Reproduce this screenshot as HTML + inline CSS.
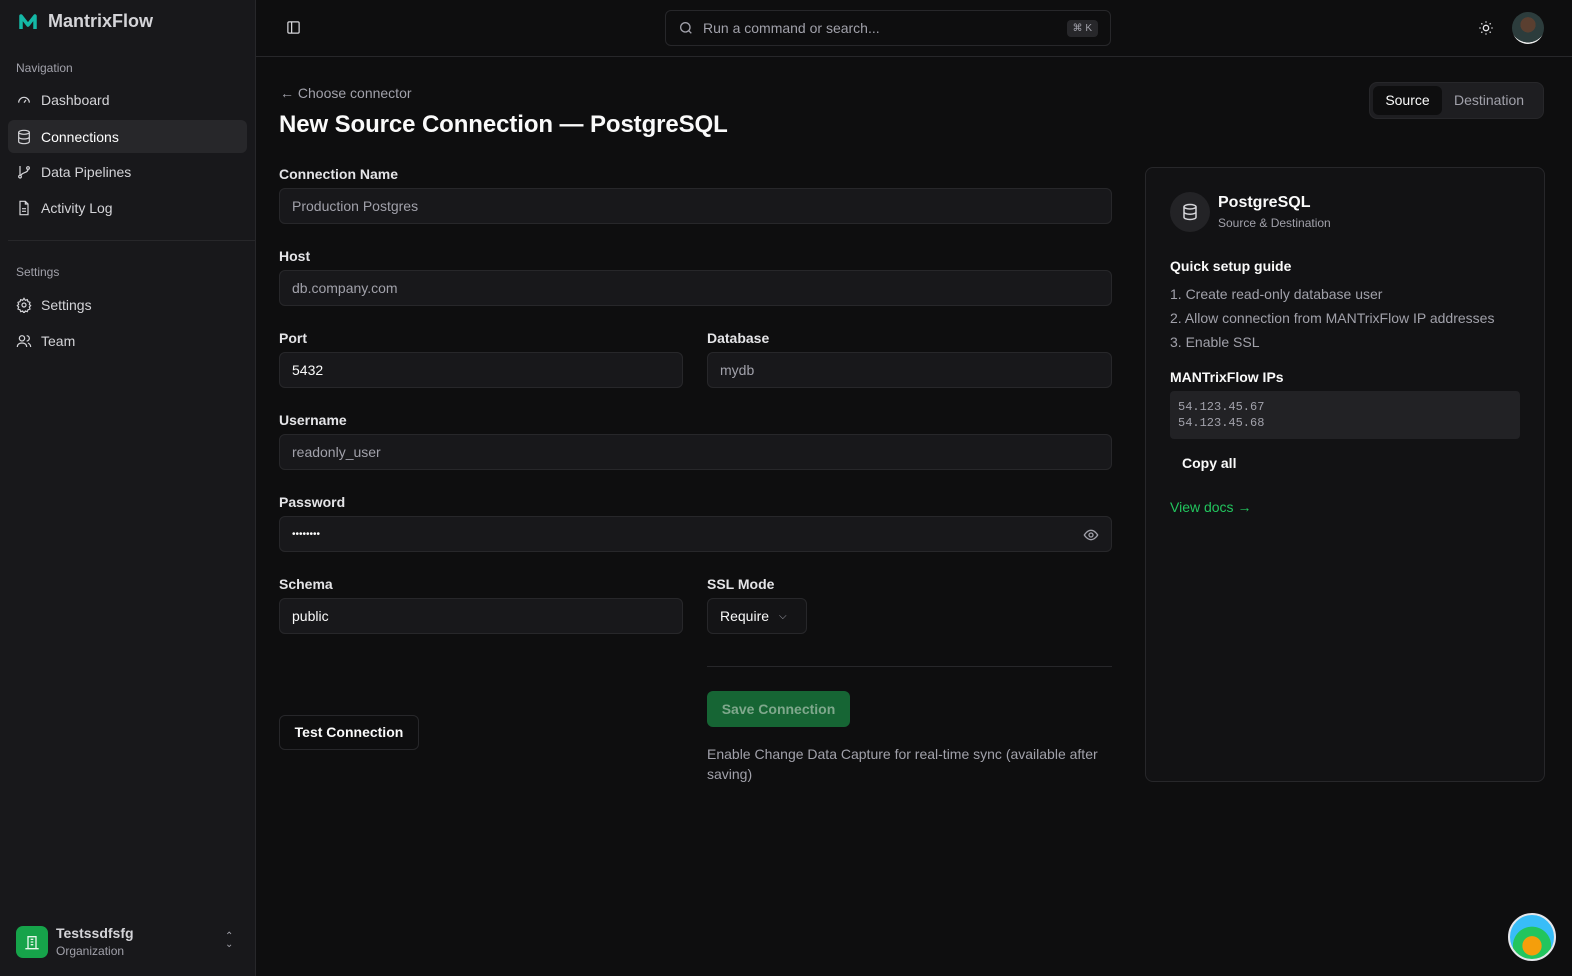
<!DOCTYPE html>
<html><head><meta charset="utf-8"><style>
*{box-sizing:border-box;margin:0;padding:0}
body{width:1572px;height:976px;background:#0e0e0f;font-family:"Liberation Sans",sans-serif;color:#fafafa;position:relative;overflow:hidden;font-size:14px}
.sb{position:absolute;left:0;top:0;width:256px;height:976px;background:#18181b;border-right:1px solid #27272a}
.logo{position:absolute;left:18px;top:11px;font-size:18px;font-weight:bold;color:#d4d4d8;display:flex;align-items:center;gap:10px}
.sec{position:absolute;left:16px;font-size:12px;color:#a1a1aa}
.nav{position:absolute;left:8px;width:239px;height:33px;display:flex;align-items:center;padding-left:8px;gap:9px;color:#d4d4d8;font-size:14px;border-radius:6px}
.nav svg{width:16px;height:16px;stroke:#d4d4d8;fill:none;stroke-width:1.8}
.nav.act{background:#27272a;color:#fff}
.top{position:absolute;left:256px;top:0;right:0;height:57px;border-bottom:1px solid #27272a}
.search{position:absolute;left:665px;top:10px;width:446px;height:36px;border:1px solid #27272a;border-radius:6px;background:#0e0e0f;color:#a1a1aa;font-size:14px;display:flex;align-items:center;padding-left:12px;gap:9px}
.kbd{position:absolute;right:12px;top:9px;background:#27272a;border-radius:4px;font-size:10px;padding:3px 6px;color:#a1a1aa}
.lbl{position:absolute;font-size:14px;font-weight:bold;color:#e4e4e7}
.inp{position:absolute;height:36px;background:#18181b;border:1px solid #27272a;border-radius:6px;padding-left:12px;display:flex;align-items:center;font-size:14px;color:#a1a1aa}
.inp.v{color:#fafafa}
.card{position:absolute;left:1145px;top:167px;width:400px;height:615px;border:1px solid #27272a;border-radius:8px;background:#121214}
.c{position:absolute;left:24px}
</style></head><body>
<div class="sb">
 <div class="logo"><svg width="20" height="20" viewBox="0 0 20 20"><path d="M3 17V4l7 9 7-9v13" stroke="#14b8a6" stroke-width="3.5" fill="none" stroke-linejoin="round"/></svg>MantrixFlow</div>
 <div class="sec" style="top:61px">Navigation</div>
 <div class="nav" style="top:83px"><svg viewBox="0 0 24 24"><path d="M4 16a8 8 0 1 1 16 0"/><path d="M12 16l3-4"/></svg>Dashboard</div>
 <div class="nav act" style="top:120px"><svg viewBox="0 0 24 24"><ellipse cx="12" cy="5" rx="8" ry="3"/><path d="M4 5v14c0 1.7 3.6 3 8 3s8-1.3 8-3V5M4 12c0 1.7 3.6 3 8 3s8-1.3 8-3"/></svg>Connections</div>
 <div class="nav" style="top:155px"><svg viewBox="0 0 24 24"><circle cx="6" cy="19" r="2"/><circle cx="18" cy="6" r="2"/><path d="M6 3v14M18 8c0 6-10 4-11 10"/></svg>Data Pipelines</div>
 <div class="nav" style="top:191px"><svg viewBox="0 0 24 24"><path d="M14 2H6v20h12V6z M14 2v4h4M9 13h6M9 17h6"/></svg>Activity Log</div>
 <div style="position:absolute;left:8px;right:0;top:240px;border-top:1px solid #27272a"></div>
 <div class="sec" style="top:265px">Settings</div>
 <div class="nav" style="top:288px"><svg viewBox="0 0 24 24"><circle cx="12" cy="12" r="3"/><path d="M12 2l2 3 3-1 1 3 3 1-1 3 2 2-2 2 1 3-3 1-1 3-3-1-2 3-2-3-3 1-1-3-3-1 1-3-2-2 2-2-1-3 3-1 1-3 3 1z"/></svg>Settings</div>
 <div class="nav" style="top:324px"><svg viewBox="0 0 24 24"><circle cx="9" cy="8" r="4"/><path d="M2 21c0-4 3-6 7-6s7 2 7 6M16 4a4 4 0 0 1 0 8M22 21c0-3-2-5-4-6"/></svg>Team</div>
 <div style="position:absolute;left:16px;top:926px;width:32px;height:32px;border-radius:7px;background:#16a34a;display:flex;align-items:center;justify-content:center"><svg width="16" height="16" viewBox="0 0 24 24" fill="none" stroke="#e7f7ec" stroke-width="2"><path d="M6 22V4h12v18M2 22h20M10 8h4M10 12h4M10 16h4"/></svg></div>
 <div style="position:absolute;left:56px;top:925px;font-size:14px;color:#d4d4d8;font-weight:bold">Testssdfsfg</div>
 <div style="position:absolute;left:56px;top:944px;font-size:12px;color:#a1a1aa">Organization</div>
 <div style="position:absolute;left:225px;top:933px;color:#a1a1aa;font-size:10px;line-height:8px">⌃<br>⌄</div>
</div>
<div class="top">
 <svg style="position:absolute;left:30px;top:20px" width="15" height="15" viewBox="0 0 24 24" fill="none" stroke="#d4d4d8" stroke-width="2"><rect x="3" y="3" width="18" height="18" rx="2"/><path d="M9 3v18"/></svg>
 <svg style="position:absolute;left:1222px;top:20px" width="16" height="16" viewBox="0 0 24 24" fill="none" stroke="#e4e4e7" stroke-width="2"><circle cx="12" cy="12" r="4"/><path d="M12 2v2M12 20v2M2 12h2M20 12h2M5 5l1.5 1.5M17.5 17.5L19 19M5 19l1.5-1.5M17.5 6.5L19 5"/></svg>
 <div style="position:absolute;left:1256px;top:12px;width:32px;height:32px;border-radius:50%;background:radial-gradient(circle at 50% 40%,#5a3f30 0 30%,#2c3c3c 31% 70%,#eee 71%)"></div>
</div>
<div class="search"><svg width="16" height="16" viewBox="0 0 24 24" fill="none" stroke="#a1a1aa" stroke-width="2"><circle cx="11" cy="11" r="7"/><path d="M20 20l-4-4"/></svg>Run a command or search...<span class="kbd">⌘ K</span></div>

<div style="position:absolute;left:280px;top:85px;font-size:14px;color:#a1a1aa">← Choose connector</div>
<div style="position:absolute;left:279px;top:111px;font-size:24px;font-weight:bold;letter-spacing:-0.1px">New Source Connection — PostgreSQL</div>
<div style="position:absolute;left:1369px;top:82px;width:175px;height:37px;background:#1e1e21;border:1px solid #27272a;border-radius:8px"><div style="position:absolute;left:3px;top:3px;width:69px;height:29px;background:#0e0e0f;border-radius:6px;text-align:center;line-height:29px;font-size:14px">Source</div><div style="position:absolute;left:84px;top:3px;line-height:29px;font-size:14px;color:#a1a1aa">Destination</div></div>

<div class="lbl" style="left:279px;top:166px">Connection Name</div>
<div class="inp" style="left:279px;top:188px;width:833px">Production Postgres</div>
<div class="lbl" style="left:279px;top:248px">Host</div>
<div class="inp" style="left:279px;top:270px;width:833px">db.company.com</div>
<div class="lbl" style="left:279px;top:330px">Port</div>
<div class="inp v" style="left:279px;top:352px;width:404px">5432</div>
<div class="lbl" style="left:707px;top:330px">Database</div>
<div class="inp" style="left:707px;top:352px;width:405px">mydb</div>
<div class="lbl" style="left:279px;top:412px">Username</div>
<div class="inp" style="left:279px;top:434px;width:833px">readonly_user</div>
<div class="lbl" style="left:279px;top:494px">Password</div>
<div class="inp v" style="left:279px;top:516px;width:833px;font-size:10px">••••••••<svg style="position:absolute;right:12px;top:10px" width="16" height="16" viewBox="0 0 24 24" fill="none" stroke="#a1a1aa" stroke-width="2"><path d="M2 12s4-7 10-7 10 7 10 7-4 7-10 7S2 12 2 12z"/><circle cx="12" cy="12" r="3"/></svg></div>
<div class="lbl" style="left:279px;top:576px">Schema</div>
<div class="inp v" style="left:279px;top:598px;width:404px">public</div>
<div class="lbl" style="left:707px;top:576px">SSL Mode</div>
<div class="inp v" style="left:707px;top:598px;width:100px;background:#141416">Require <span style="color:#a1a1aa;margin-left:10px;font-size:10px">⌵</span></div>
<div style="position:absolute;left:707px;top:666px;width:405px;border-top:1px solid #27272a"></div>
<div style="position:absolute;left:707px;top:691px;width:143px;height:36px;background:#166534;border-radius:6px;color:#7fa88c;font-size:14px;font-weight:bold;text-align:center;line-height:36px">Save Connection</div>
<div style="position:absolute;left:279px;top:715px;width:140px;height:35px;border:1px solid #27272a;border-radius:6px;background:#0e0e0f;font-size:14px;font-weight:bold;text-align:center;line-height:33px">Test Connection</div>
<div style="position:absolute;left:707px;top:744px;width:410px;font-size:14px;color:#a1a1aa;line-height:20px">Enable Change Data Capture for real-time sync (available after saving)</div>

<div class="card">
 <div style="position:absolute;left:24px;top:24px;width:40px;height:40px;border-radius:50%;background:#232326;display:flex;align-items:center;justify-content:center"><svg width="18" height="18" viewBox="0 0 24 24" fill="none" stroke="#d4d4d8" stroke-width="2"><ellipse cx="12" cy="5" rx="8" ry="3"/><path d="M4 5v14c0 1.7 3.6 3 8 3s8-1.3 8-3V5M4 12c0 1.7 3.6 3 8 3s8-1.3 8-3"/></svg></div>
 <div style="position:absolute;left:72px;top:26px;font-size:16px;font-weight:bold">PostgreSQL</div>
 <div style="position:absolute;left:72px;top:48px;font-size:12px;color:#a1a1aa">Source &amp; Destination</div>
 <div class="c" style="top:90px;font-weight:bold;font-size:14px">Quick setup guide</div>
 <div class="c" style="top:114px;font-size:14px;color:#a1a1aa;line-height:24px">1. Create read-only database user<br>2. Allow connection from MANTrixFlow IP addresses<br>3. Enable SSL</div>
 <div class="c" style="top:201px;font-weight:bold;font-size:14px">MANTrixFlow IPs</div>
 <div class="c" style="top:223px;width:350px;height:48px;background:#222225;border-radius:4px;padding:8px;font-family:'Liberation Mono',monospace;font-size:12px;color:#a1a1aa;line-height:16px">54.123.45.67<br>54.123.45.68</div>
 <div style="position:absolute;left:36px;top:287px;font-size:14px;font-weight:bold">Copy all</div>
 <div class="c" style="top:331px;font-size:14px;color:#22c55e">View docs →</div>
</div>
<div style="position:absolute;left:1508px;top:913px;width:48px;height:48px;border-radius:50%;background:radial-gradient(circle at 50% 70%,#f59e0b 0 25%,#22c55e 26% 50%,#38bdf8 51%);border:2px solid #e5e7eb"></div>
</body></html>
